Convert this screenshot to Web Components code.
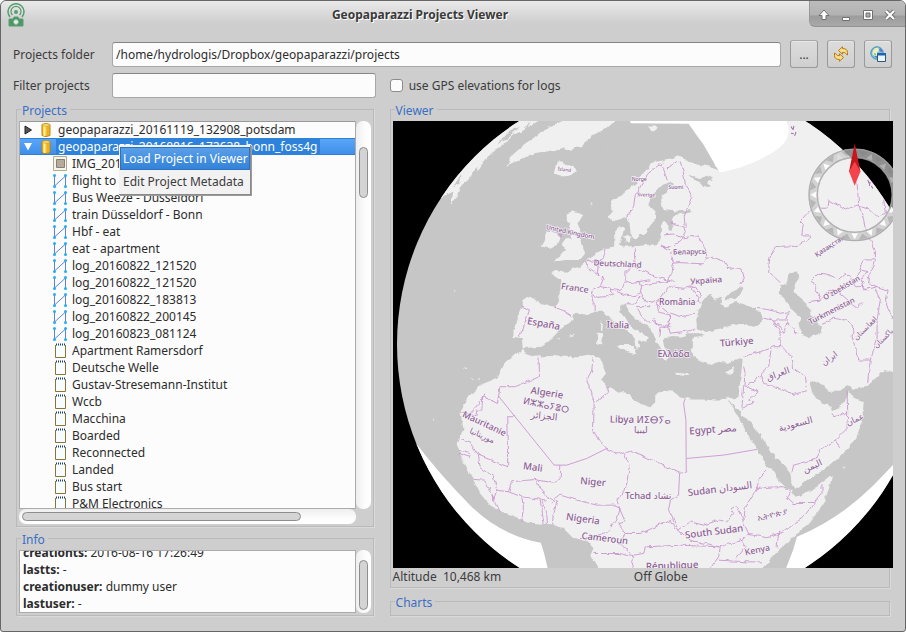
<!DOCTYPE html>
<html lang="en">
<head>
<meta charset="utf-8">
<title>Geopaparazzi Projects Viewer</title>
<style>
  body { margin: 0; background: #fff; font: 12px/17px "Noto Sans", "DejaVu Sans", sans-serif; color: #3c3c3c; }
</style>
</head>
<body>
<app-window></app-window>

<template id="tpl-window">
  <style>
    :host { display: flex; flex-direction: column; height: 100vh; box-sizing: border-box; overflow: hidden;
      background: #cecece; border: 1px solid #666; border-radius: 6px 6px 3px 3px; }
    main { flex: 1; min-height: 0; display: flex; flex-direction: column; padding: 13px 15px 0 12px; }
    project-controls { margin-right: -2px; }
    .cols { flex: 1; min-height: 0; display: grid; grid-template-columns: minmax(0, 358fr) minmax(0, 501fr); gap: 16px; padding: 0 0 15px 3px; }
    .col { display: flex; flex-direction: column; min-height: 0; }
    .grow { flex: 1; min-height: 0; }
    .gap { padding-top: 2px; }
  </style>
  <title-bar>Geopaparazzi Projects Viewer</title-bar>
  <main>
    <project-controls></project-controls>
    <div class="cols">
      <div class="col">
        <group-box class="grow" legend="Projects"><project-tree></project-tree></group-box>
        <group-box legend="Info"><info-pane></info-pane></group-box>
      </div>
      <div class="col">
        <group-box class="grow" legend="Viewer"><globe-view></globe-view></group-box>
        <group-box class="gap" legend="Charts"></group-box>
      </div>
    </div>
  </main>
</template>

<template id="tpl-title">
  <style>
    :host { display: flex; height: 26px; background: linear-gradient(#eaeaea, #d0d0d0 20px, #cecece); border-radius: 5px 5px 0 0; }
    .logo { width: 18px; height: 24px; margin: 2px 0 0 6px; }
    h1 { flex: 1; margin: 0; padding: 2px 0 0 6px; text-align: center; font: bold 12px/24px "Noto Sans", sans-serif; color: #3a3a3a; text-shadow: 1px 1px 0 #fff; }
    nav { display: flex; box-sizing: border-box; height: 26px; padding: 0 4px 0 3px; border-left: 1px solid #999; border-bottom: 1px solid #929292; border-radius: 0 5px 0 6px; background: linear-gradient(#bcbcbc, #b2b2b2 14px, #9c9c9c 15px, #a9a9a9); }
    button { border: 0; padding: 2px 0 0; width: 22px; background: none; }
    svg { display: block; margin: auto; }
  </style>
  <svg class="logo" viewBox="0 0 18 24" fill="none" stroke="#5a9e70" aria-hidden="true">
    <path d="M3 14A8 8 0 1 1 15 14" stroke-width="1.5"/><path d="M5.5 12A5 5 0 1 1 12.500 12" stroke-width="1.300"/>
    <circle cx="9" cy="9" r="2" fill="#5a9e70" stroke="none"/>
    <path d="M2 16h4l1-2h4l1 2h4v7H2z" fill="#4e9668"/><circle cx="9" cy="19" r="2.400" fill="#eee" stroke="#8fbf9f"/>
  </svg>
  <h1><slot></slot></h1>
  <nav>
    <button aria-label="Roll up"><svg width="12" height="12" viewBox="0 0 12 12"><path d="M6 1L11 6.500H8V10.500H4V6.500H1Z" fill="#fff" stroke="#707070"/></svg></button>
    <button aria-label="Minimize"><svg width="12" height="12" viewBox="0 0 12 12"><path d="M2.500 8.500h7v3h-7z" fill="#fff" stroke="#707070"/></svg></button>
    <button aria-label="Maximize"><svg width="12" height="12" viewBox="0 0 12 12"><path d="M1.500 1.500h9v9h-9z" fill="#fff" stroke="#707070"/><path d="M4 4h4v4H4z" fill="#aaa" stroke="#707070"/></svg></button>
    <button aria-label="Close"><svg width="12" height="12" viewBox="0 0 12 12"><path d="M2 2l8 8M10 2l-8 8" stroke="#707070" stroke-width="4"/><path d="M2 2l8 8M10 2l-8 8" stroke="#fff" stroke-width="2.200"/></svg></button>
  </nav>
</template>

<template id="tpl-controls">
  <style>
    :host { display: flex; flex-direction: column; gap: 4px; }
    .row { display: grid; align-items: center; height: 28px; }
    .folder { grid-template-columns: 90px 1fr repeat(3, 28px); column-gap: 9px; }
    .filter { grid-template-columns: 99px 264fr 517fr; height: 26px; }
    input[type=text] { box-sizing: border-box; min-width: 0; height: 25px; padding: 0 3px; border: 1px solid #a8a8a8; border-top-color: #858585; border-radius: 3px; background: #fcfcfc; font: inherit; color: #2c2c2c; }
    button { width: 28px; height: 28px; box-sizing: border-box; padding: 0; border: 1px solid #999; border-top-color: #aaa; border-radius: 3px; background: linear-gradient(#dcdcdc, #cfcfcf); box-shadow: inset 0 1px #e8e8e8; font: inherit; color: #3c3c3c; }
    button svg { display: block; margin: auto; }
    .check { display: flex; align-items: center; gap: 6px; padding-left: 14px; }
    .check input { appearance: none; margin: 0; width: 13px; height: 13px; box-sizing: border-box; border: 1px solid #8c8c8c; border-radius: 3px; background: #fcfcfc; }
  </style>
  <div class="row folder">
    <label for="folder">Projects folder</label>
    <input type="text" id="folder" value="/home/hydrologis/Dropbox/geopaparazzi/projects">
    <button aria-label="Browse">...</button>
    <button aria-label="Refresh"><svg width="16" height="16" viewBox="0 0 16 16" fill="#fbe08a" stroke="#b67a10" stroke-linejoin="round"><path d="M5.500 4.500L9.500 .8V2.500Q14.500 2.500 14.500 6.500V9L12.500 7.500Q12.500 6 9.500 6.300V8.200Z"/><path d="M10.500 11.500L6.500 15.200V13.500Q1.500 13.500 1.500 9.500V7L3.500 8.500Q3.500 10 6.500 9.700V7.800Z"/></svg></button>
    <button aria-label="Open in browser"><svg width="16" height="16" viewBox="0 0 16 16"><circle cx="7" cy="7" r="6.200" fill="#7cc4d8" stroke="#3b93b6"/><path d="M2.500 6l2-3.500 3.500-1 1 3-2 2 1.500 2-3 2-3-2z" fill="#f5ecc0"/><path d="M4 7l2 1-1 2z" fill="#58a860"/><path d="M10 2l3 3-2 1-2-2zM4 10l3 0 1 3z" fill="#5e78e0"/><path d="M7.500 7.500h8v8h-8z" fill="#e7f6ff" stroke="#35556e"/><path d="M7 7h9v2.500H7z" fill="#2464a8"/></svg></button>
  </div>
  <div class="row filter">
    <label for="filter">Filter projects</label>
    <input type="text" id="filter">
    <label class="check"><input type="checkbox">use GPS elevations for logs</label>
  </div>
</template>

<template id="tpl-group">
  <style>
    :host { display: flex; min-width: 0; }
    fieldset { flex: 1; min-width: 0; margin: 0; padding: 1px 2px 2px; border: 1px solid #bababa; box-shadow: 1px 1px 0 #dadada; display: flex; flex-direction: column; }
    legend { margin-left: 2px; padding: 4px 3px 0 1px; line-height: 18px; color: #3b6fc4; }
  </style>
  <fieldset><legend></legend><slot></slot></fieldset>
</template>

<template id="tpl-scroll">
  <style>
    :host { display: flex; box-sizing: border-box; border-radius: 7px; background: linear-gradient(90deg, #eee, #fcfcfc 60%, #fff); width: 15px; padding: 0 3px; flex-direction: column; }
    :host([horizontal]) { width: auto; height: 15px; padding: 3px; flex-direction: row; background: linear-gradient(#eee, #fcfcfc 60%, #fff); }
    .before { flex: var(--before, 0); } .thumb { flex: var(--thumb, 1); box-sizing: border-box; border: 1px solid #8e8e8e; border-radius: 5px; background: #d4d4d4; } .after { flex: var(--after, 0); }
  </style>
  <div class="before"></div><div class="thumb"></div><div class="after"></div>
</template>

<template id="tpl-tree">
  <style>
    :host { flex: 1; min-height: 0; display: grid; grid-template: minmax(0, 1fr) 15px / minmax(0, 1fr) 15px; position: relative; }
    .list { overflow: hidden; background: #fcfcfc; border: 1px solid #ababab; border-top: 0; box-shadow: inset 0 1px #999; }
    .v { --before: 26; --thumb: 50; --after: 313; }
    .h { --before: 0; --thumb: 279; --after: 52; }
    context-menu { position: absolute; left: 100px; top: 24px; }
  </style>
  <div class="list" role="tree"></div>
  <scroll-bar class="v"></scroll-bar>
  <scroll-bar class="h" horizontal></scroll-bar>
  <context-menu></context-menu>
</template>

<template id="tpl-row">
  <style>
    :host { display: flex; align-items: center; height: 17px; padding-left: 33px; color: #2c2c2c; white-space: nowrap; }
    :host([level="1"]) { padding-left: 4px; }
    .arrow { display: none; width: 8px; height: 10px; margin-right: 7px; }
    :host([level="1"]) .arrow { display: block; }
    .icon { width: 14px; height: 16px; }
    span { padding: 0 3px 0 5px; line-height: 17px; }
    :host([level="1"]) span { padding-left: 2px; margin-left: 3px; }
    :host([selected]) { color: #fff; background: linear-gradient(#5ba6f8, #3d8eea); box-shadow: inset 0 1px #2e80d6, inset 0 -1px #2e80d6; }
    :host([selected]) span { background: #2e82da; }
  </style>
  <svg class="arrow" viewBox="0 0 8 10"></svg><svg class="icon" viewBox="0 0 14 16"></svg><span><slot></slot></span>
</template>

<template id="tpl-menu">
  <style>
    :host { display: flex; flex-direction: column; padding: 2px 0 1px 1px; background: #f2f2f2; border: solid #8a8a8a; border-width: 0 1px 1px 0; box-shadow: 1px 1px 0 #9a9a9a; }
    button { height: 23px; padding: 0 1px 0 2px; border: 1px solid transparent; background: #f2f2f2; font: inherit; color: #3c3c3c; text-align: left; white-space: nowrap; }
    .on { color: #fff; background: linear-gradient(#5a9fe8, #3383d8); border-color: #2a72c4; }
  </style>
  <button class="on" role="menuitem">Load Project in Viewer</button>
  <button role="menuitem">Edit Project Metadata</button>
</template>

<template id="tpl-info">
  <style>
    :host { display: grid; grid-template-columns: minmax(0, 1fr) 15px; height: 63px; }
    .text { display: flex; flex-direction: column; justify-content: flex-end; overflow: hidden; padding: 0 3px; background: #fcfcfc; border: 1px solid #ababab; color: #2c2c2c; }
    scroll-bar { --before: 10; --thumb: 50; --after: 3; }
    .text div { flex: none; height: 17px; }
  </style>
  <div class="text">
    <div><b>creationts:</b> <span>2016-08-16 17:26:49</span></div>
    <div><b>lastts:</b> <span>-</span></div>
    <div><b>creationuser:</b> <span>dummy user</span></div>
    <div><b>lastuser:</b> <span>-</span></div>
  </div>
  <scroll-bar></scroll-bar>
</template>

<template id="tpl-globe">
  <style>
    :host { flex: 1; min-height: 0; display: flex; flex-direction: column; margin-right: -6px; }
    .map { flex: 1; min-height: 0; width: 100%; display: block; background: #000; }
    .status { display: grid; grid-template-columns: 241fr 259fr; height: 17px; line-height: 17px; white-space: pre; }
    text { font-family: "Noto Sans", "DejaVu Sans", sans-serif; font-weight: 500; fill: #8a5e92; stroke: #f6f2f6; stroke-width: 4; paint-order: stroke; text-anchor: middle; }
  </style>
  <svg class="map" viewBox="9 3 1500 1341" preserveAspectRatio="xMidYMid slice" role="img" aria-label="Globe">
    <defs>
      <clipPath id="disc"><circle cx="816" cy="673" r="795"/></clipPath>
      <filter id="rough" x="0" y="0" width="1510" height="1350" filterUnits="userSpaceOnUse"><feTurbulence type="fractalNoise" baseFrequency="0.050" numOctaves="2" seed="4"/><feDisplacementMap in="SourceGraphic" scale="14" xChannelSelector="R" yChannelSelector="G"/></filter>
    </defs>
    <g clip-path="url(#disc)">
      <path fill="#c6c6c6" d="M0 0H1520V1350H0Z"/>
      <g filter="url(#rough)">
        <g fill="#f0f0f0">
          <path d="M988 158L970 142 945 138 900 130 885 118 860 110 830 118 800 125 780 135 765 155 750 168 740 190 715 210 690 228 665 240 662 260 668 275 655 290 665 305 690 298 712 290 718 310 722 350 735 358 745 345 765 345 775 325 785 310 797 290 792 275 778 260 780 225 795 215 815 195 845 185 848 200 825 220 812 240 820 270 860 275 900 270 900 278 850 287 845 300 852 322 838 330 825 305 812 320 812 350 800 372 745 378 700 380 690 375 697 345 702 322 688 318 672 335 672 380 648 385 615 400 605 415 580 425 575 440 550 445 535 455 510 455 498 450 483 460 495 470 510 480 512 520 495 560 460 555 420 530 398 540 398 560 390 580 370 630 370 650 395 655 398 685 430 682 455 680 475 665 500 640 515 625 550 600 550 585 560 578 590 585 615 575 640 575 655 590 680 615 700 625 725 645 735 665 740 688 750 680 745 660 765 665 775 655 755 640 730 625 708 605 690 575 690 560 710 548 715 575 740 600 780 625 790 650 800 670 812 690 808 712 832 722 836 700 822 680 818 660 845 648 875 650 892 640 920 640 905 660 905 690 910 710 935 722 960 735 985 725 1010 728 1050 715 1057 718 1055 740 1048 800 1045 830 1030 835 1010 830 985 842 940 838 900 838 870 832 850 815 820 812 795 825 795 850 780 862 740 845 715 820 690 815 650 800 632 780 648 760 640 740 630 715 610 705 560 712 480 708 430 710 405 700 395 690 380 700 350 725 330 750 320 775 270 795 245 820 225 850 212 875 215 900 220 925 212 950 203 970 210 1000 225 1035 250 1080 270 1120 300 1155 335 1175 380 1190 410 1207 450 1210 485 1212 520 1225 545 1250 590 1265 610 1280 600 1310 615 1325 630 1350H1110L1170 1285 1250 1215 1295 1160 1320 1090 1325 1065 1280 1100 1230 1125 1215 1130 1205 1115 1165 1085 1150 1055 1130 1040 1110 1000 1080 960 1050 900 1030 870 1010 832 1035 865 1052 870 1052 885 1080 905 1120 960 1145 1000 1180 1035 1200 1060 1205 1095 1215 1108 1250 1080 1300 1050 1350 1010 1395 960 1415 905 1420 845 1395 835 1375 815 1365 840 1350 860 1325 870 1315 850 1300 855 1285 840 1265 815 1258 790 1270 780 1300 795 1320 815 1350 815 1375 795 1390 808 1430 800 1460 770 1480 750 1530 760V-20H900Z"/>
          <path d="M352 138L362 110 385 90 430 55 460 30 500 10 540-10H690L650 25 610 45 585 65 575 82 560 80 545 90 520 85 470 95 430 100 400 115Z"/>
          <path d="M370-10H465L430 10 400 32 370 45 340 75 325 85 290 110 265 150 235 180 210 200 200 230 182 252 190 215 150 235 160 190Z"/>
          <path d="M490 160L500 125 520 125 530 137 550 135 557 155 540 168 510 170Z"/>
          <path d="M530 280L550 275 577 285 562 310 570 330 572 355 580 385 585 400 570 420 530 420 490 425 515 400 525 385 515 375 525 360 545 355 535 330 540 310 530 300Z"/>
          <path d="M470 335L500 340 510 350 500 375 475 385 455 380 465 360 465 345Z"/>
          <path d="M632 600l6 10-2 22-7-4zM620 638l16 2-3 32-12 2zM680 675l50 0 8 28-20-5-35-16zM856 758l40 4-1 6-40-3zM1005 757l30-15-8 16-14 6zM702 348l18 2 0 18-14 0zM535 648l14-4 0 8zM500 655l6 0 0 5zM568 213l5 0-3 6zM600 252l8-3-6 10zM770 20l30 0-5 10-10 5zM1355 1042l10-3-4 6zM643 92l3 0 0 2z"/>
          <path d="M190 512l5 1 0 4zM205 542l4 1-2 3zM222 745l6 2-2 4zM245 772l8 2-4 4zM262 778l8-4-2 10zM130 895l3 10-3 1zM140 905l4 0 0 6z"/>
        </g>
        <g fill="#c6c6c6">
          <path d="M897 165L930 175 950 168 968 178 950 185 962 200 940 202 920 185Z"/>
          <path d="M960 525L975 540 995 530 990 552 1005 560 1035 545 1080 560 1115 585 1118 605 1100 618 1060 612 1030 615 990 625 950 635 920 625 918 600 925 570 935 545 950 527Z"/>
          <path d="M1003 538L1025 515 1057 500 1052 518 1035 537ZM905 645l20-6 15 6-25 6z"/>
          <path d="M1195 460L1220 458 1230 470 1215 490 1210 510 1225 535 1250 550 1260 580 1275 600 1295 625 1290 640 1260 652 1230 640 1225 610 1230 590 1205 570 1190 545 1168 520 1175 495 1190 490Z"/>
          <path d="M245 160l20-20-10 30-20 12zM320 75l30-35 40-20-30 30zM190 200l25-40-5 30zM400 25l22-20-10 18z"/>
        </g>
        <g fill="none" stroke="#c993ce" stroke-width="2.600" stroke-linejoin="round">
          <path d="M490 560L520 572 548 590M395 558L418 570 408 600 398 630 385 652M582 422L590 440 620 460 640 475 630 500 610 510 605 525 612 545 612 575M590 422L625 425 622 460M648 385L640 415 615 430M630 500L660 505 670 520 650 530 620 532 610 520M660 508L690 512 705 490 740 485 755 495 750 520 735 530 705 525 680 515M732 385L735 440 715 450 700 465 712 485M735 440L775 462 800 470 830 480 850 485M740 485L780 480M812 375L840 390 850 430 845 460 830 485M755 495L790 490 830 485M750 520L765 545 790 550 815 530 835 500M710 548L735 550 750 530M738 560H780M740 565L755 590 778 612M835 500L880 505 900 500 925 535 930 550M815 530L800 550 830 575 870 590 915 583M895 498L915 500 935 530 920 545M800 550L805 575 835 585 840 610 825 620 800 610 790 595M838 588L835 620 840 640 900 632 915 625M785 600L810 620 805 650M810 625L840 620"/>
          <path d="M850 430L870 428 940 432 950 415 970 412 1000 425 1010 442 1055 450 1062 475 1050 495M812 380H840M875 355L900 350 925 352 945 385 950 412M825 345L850 342 875 355 850 380M840 312L880 320 885 335 875 355M882 290L885 320M870 125L880 160 885 190 905 230 890 265 882 290M805 130L820 145 832 185M820 130L800 140 775 160 750 200 735 230 730 260 712 290M832 145L860 125M508 340L515 350 500 345"/>
          <path d="M1170 488L1135 455 1138 415 1155 380 1190 378 1220 380 1240 365 1258 355 1255 345 1235 345 1238 315 1228 305 1260 270 1290 265 1310 265 1313 240 1340 255 1365 270 1395 258 1405 255 1400 190M1405 258L1440 270 1460 290 1485 280 1480 240M1405 255L1420 300 1425 330 1455 395 1455 420 1420 420 1405 450 1430 455 1410 480 1420 510 1460 500 1490 510 1485 540 1495 570 1508 600M1290 540L1275 500 1265 480 1285 460 1310 462 1345 478 1365 460 1380 475 1395 500 1420 500 1430 515M1255 545L1290 540 1320 510 1340 515 1380 550 1400 565 1425 540M1295 610L1330 595 1365 600 1390 620 1385 650 1395 690 1405 720 1440 720 1460 660 1460 600 1470 540 1450 500M1440 720L1435 750 1432 790M1455 420L1440 450 1435 490 1460 500M1410 450L1400 475 1420 490"/>
          <path d="M1090 565L1130 568 1170 580 1200 575M1120 595L1150 600 1190 600 1195 580M1150 600L1180 640 1190 605 1220 640M1150 605L1170 640 1165 660 1175 680M1060 710L1110 695 1150 680 1175 680 1205 710 1210 745 1245 770 1250 800M1142 690L1135 740 1110 765 1080 790 1065 795M1110 765L1120 790 1170 805 1210 823 1250 812M1060 795L1090 810 1105 815 1075 840 1090 850 1055 865M1060 740L1065 760 1060 800 1055 860M1325 880L1330 890 1372 877M1370 815L1372 875 1370 925 1335 960 1290 990 1275 1018 1210 1035 1205 1055M1335 960L1348 980"/>
          <path d="M608 715L605 750 590 780 612 845 610 930 625 960 650 985 690 1003 720 990 870 1060 888 1055M618 845L650 820 655 800M447 715L448 770 400 790 375 800 330 800 322 850 280 830 285 820M278 828L255 865 240 880M278 830L275 870 260 870 258 890 215 875M375 890H350L353 1040 265 1005M210 955L240 965 265 1005 270 1040 310 1070 320 1110 355 1115 365 1085 435 1078 495 1090 510 1075 512 1035M205 990L240 1000M205 1000L240 1012M250 1078L285 1080 300 1110 330 1175M320 1110L310 1140M355 1115L395 1130 470 1140M435 1078L455 1115 495 1145M395 1130L400 1160 395 1205M450 1140L462 1210M455 1140L470 1180 472 1212M500 1140L485 1212M485 1145L510 1125 560 1140 620 1155 670 1155 690 1165 680 1200 650 1235 600 1255 570 1255M703 1000L717 1045 705 1110 680 1140 690 1170 705 1205 683 1210 705 1240 750 1240 785 1225 840 1200 855 1225M865 1125L840 1140 835 1170 850 1200 865 1230 900 1205 940 1215 985 1200 1010 1205 1030 1180 1020 1165 1040 1160 1055 1190 1060 1210 1065 1160 1090 1120 1100 1100 1110 1070 1130 1050M1100 1105L1150 1100 1180 1100 1200 1115 1190 1130 1210 1150 1270 1150 1240 1190 1180 1235 1130 1250 1075 1240 1060 1210M1270 1150L1295 1120V1095M1165 1235L1160 1285M1075 1240L1055 1260 1065 1280 1040 1315M865 1230L900 1260 990 1280 1055 1260M730 1305L760 1300 765 1280 870 1275 990 1280 985 1310 960 1344M610 1300L690 1300 730 1310 725 1344M705 1240L690 1270 720 1300M985 1320L1070 1325 1115 1325"/>
        </g>
      </g>
      <g fill="none" stroke="#c993ce" stroke-width="2.600"><path d="M650 985L590 1015 530 1035H492L325 828M885 835L880 850 887 900 888 1055M890 1015L1000 1005 1100 988M868 1060L865 1125"/></g>
      <g fill="#fff">
        <path d="M718 0L722 10 895 12 915 40 940 75 988 158Q1060 145 1130 108 1220 60 1186 0Z"/>
        <path d="M70 960Q150 1065 240 1155T452 1268L462 1300 474 1350H0V960Z"/>
        <path d="M1185 1350L1208 1290 1220 1250Q1350 1195 1450 1095L1512 1030V1350Z"/>
      </g>
      <path d="M1202 20l5 8m4-10l-3 12m-6 10l8 2m3 6l4-12M1432 180l4 10m3-4l-2 12m6 0l4 8" fill="none" stroke="#a06aa8" stroke-width="3"/>
      <g id="labels"></g>
    </g>
    <g id="compass" transform="translate(1393 225)">
      <circle r="125" fill="none" stroke="#c8c8c8" stroke-opacity=".72" stroke-width="26"/>
      <g id="ticks"></g>
      <circle r="137" fill="none" stroke="#a4a4a4" stroke-opacity=".8" stroke-width="4"/><circle r="112" fill="none" stroke="#a4a4a4" stroke-opacity=".8" stroke-width="4"/>
      <path d="M0-155L17-70H-17Z" fill="#c4161d"/><path d="M-17-70L0-100 17-70 0-27Z" fill="#f2444a"/>
    </g>
  </svg>
  <div class="status"><span>Altitude  10,468 km</span><span>Off Globe</span></div>
</template>

<script>
  const define = (name, tpl, setup) => customElements.define(name, class extends HTMLElement {
    constructor() {
      super();
      this.attachShadow({ mode: "open" }).append(document.getElementById(tpl).content.cloneNode(true));
    }
    connectedCallback() { if (setup && !this.ready) { this.ready = true; setup(this, this.shadowRoot); } }
  });

  const ICONS = {
    db: '<path d="M3 2.500Q7 .5 11 2.500V13.500Q7 15.500 3 13.500Z" fill="#f5c02c" stroke="#b98212"/><path d="M5.500 4v10" stroke="#fff0a0" stroke-width="2"/><path d="M9 4v10" stroke="#e0a420"/><ellipse cx="7" cy="3" rx="3.500" ry="1.200" fill="#ffe680" stroke="#c8921a" stroke-width=".6"/>',
    image: '<path d="M.5 .5h13v14H.5z" fill="#f4f4ee" stroke="#b5ab88"/><path d="M3.500 3.500h8v8h-8z" fill="#b5aa9c" stroke="#8c7f72"/>',
    log: '<path d="M1.500 3v10L12.500 3v10" fill="none" stroke="#5b84d8"/><g fill="#25aef0"><circle cx="1.500" cy="2.500" r="1.500"/><circle cx="12.500" cy="2.500" r="1.500"/><circle cx="1.500" cy="13.500" r="1.500"/><circle cx="12.500" cy="13.500" r="1.500"/></g>',
    note: '<path d="M2.500 2v12.500h10V2" fill="#f6fcff" stroke="#8a7434"/><path d="M3 1.500h10" stroke="#16406e" stroke-width="2" stroke-dasharray="1 1"/>'
  };
  const ROWS = [
    ["db", "geopaparazzi_20161119_132908_potsdam"], ["db", "geopaparazzi_20160816_172638_bonn_foss4g"],
    ["image", "IMG_2016"], ["log", "flight to"], ["log", "Bus Weeze - Düsseldorf"], ["log", "train Düsseldorf - Bonn"],
    ["log", "Hbf - eat"], ["log", "eat - apartment"], ["log", "log_20160822_121520"], ["log", "log_20160822_121520"],
    ["log", "log_20160822_183813"], ["log", "log_20160822_200145"], ["log", "log_20160823_081124"],
    ["note", "Apartment Ramersdorf"], ["note", "Deutsche Welle"], ["note", "Gustav-Stresemann-Institut"], ["note", "Wccb"],
    ["note", "Macchina"], ["note", "Boarded"], ["note", "Reconnected"], ["note", "Landed"], ["note", "Bus start"], ["note", "P&M Electronics"]
  ];
  /* text, x, y, font size, rotation */
  const LABELS = [
    ["Ísland", 522, 154, 14, 8], ["Norge", 747, 184, 15, 0], ["Sverige", 768, 230, 15, 2], ["Suomi", 857, 207, 15, 0],
    ["United Kingdom", 539, 343, 19, 12], ["Deutschland", 682, 440, 24, 3], ["France", 553, 513, 26, 8], ["España", 459, 621, 29, 10],
    ["Italia", 683, 624, 28, 2], ["Беларусь", 898, 403, 22, -1], ["Україна", 948, 490, 25, -4], ["România", 861, 556, 26, 0],
    ["Ελλάδα", 850, 711, 28, 0], ["Türkiye", 1040, 676, 29, -5], ["Қазақстан", 1322, 384, 20, -33], ["O'zbekistan", 1357, 510, 22, -30],
    ["Türkmenistan", 1327, 580, 23, -27], ["افغانستان", 1430, 630, 22, -45], ["پاکستان", 1484, 660, 22, -45], ["ایران", 1322, 722, 25, -38],
    ["العراق", 1166, 770, 27, -20], ["السعودية", 1218, 921, 28, -15], ["اليمن", 1270, 1046, 27, -25], ["عمان", 1397, 906, 25, -25],
    ["Algerie", 469, 828, 29, 9], ["ⵍⵣⵣⴰⵢⴻⵔ", 466, 865, 27, 12], ["الجزائر", 461, 897, 28, 6], ["Libya ⵍⵉⴱⵢⴰ", 750, 909, 29, 1], ["ليبيا", 752, 940, 27, 0],
    ["Egypt مصر", 969, 938, 29, -4], ["Mauritanie", 279, 919, 27, 25], ["موريتانيا", 273, 954, 24, 24], ["Mali", 427, 1051, 29, 8],
    ["Niger", 608, 1095, 29, 5], ["Tchad تشاد", 774, 1137, 28, 0], ["Sudan السودان", 990, 1116, 29, -7], ["South Sudan", 973, 1244, 29, -7],
    ["Nigeria", 577, 1206, 29, 8], ["Cameroun", 643, 1264, 28, 7], ["ኢትዮጵያ", 1148, 1192, 26, -14], ["Kenya", 1103, 1298, 26, -12], ["République", 846, 1346, 29, -2]
  ];

  define("scroll-bar", "tpl-scroll");
  define("context-menu", "tpl-menu", el => el.setAttribute("role", "menu"));
  define("tree-row", "tpl-row", (el, root) => {
    el.setAttribute("role", "treeitem");
    root.querySelector(".icon").innerHTML = ICONS[el.getAttribute("icon")];
    root.querySelector(".arrow").innerHTML = el.hasAttribute("selected")
      ? '<path d="M0 1h8L4 8.500z" fill="#fff"/>' : '<path d="M1 1l6.500 4L1 9z" fill="#555" stroke="#222"/>';
  });
  define("project-tree", "tpl-tree", (el, root) => {
    const list = root.querySelector(".list");
    ROWS.forEach(([icon, label], i) => {
      const row = document.createElement("tree-row");
      row.setAttribute("icon", icon);
      row.setAttribute("level", icon === "db" ? 1 : 2);
      if (i === 1) row.setAttribute("selected", "");
      row.textContent = label;
      list.append(row);
    });
  });
  define("info-pane", "tpl-info");
  define("globe-view", "tpl-globe", (el, root) => {
    root.getElementById("labels").innerHTML = LABELS.map(([t, x, y, s, r]) =>
      `<text x="${x}" y="${y}" font-size="${s}" transform="rotate(${r} ${x} ${y})">${t}</text>`).join("");
    root.getElementById("ticks").innerHTML = Array.from({ length: 16 }, (_, i) => {
      const dark = i < 5 || i > 14;
      return `<path d="M-14-134H14L0-118Z" transform="rotate(${i * 22.5 + 11.25})" fill="#808080" fill-opacity=".35"/>` +
        `<path d="M-10-115H10L0-133Z" transform="rotate(${i * 22.5})" fill="#fff" fill-opacity="${dark ? 0.3 : 0.95}"/>`;
    }).join("");
  });
  define("group-box", "tpl-group", (el, root) => { root.querySelector("legend").textContent = el.getAttribute("legend"); });
  define("project-controls", "tpl-controls");
  define("title-bar", "tpl-title");
  define("app-window", "tpl-window");
</script>
</body>
</html>
